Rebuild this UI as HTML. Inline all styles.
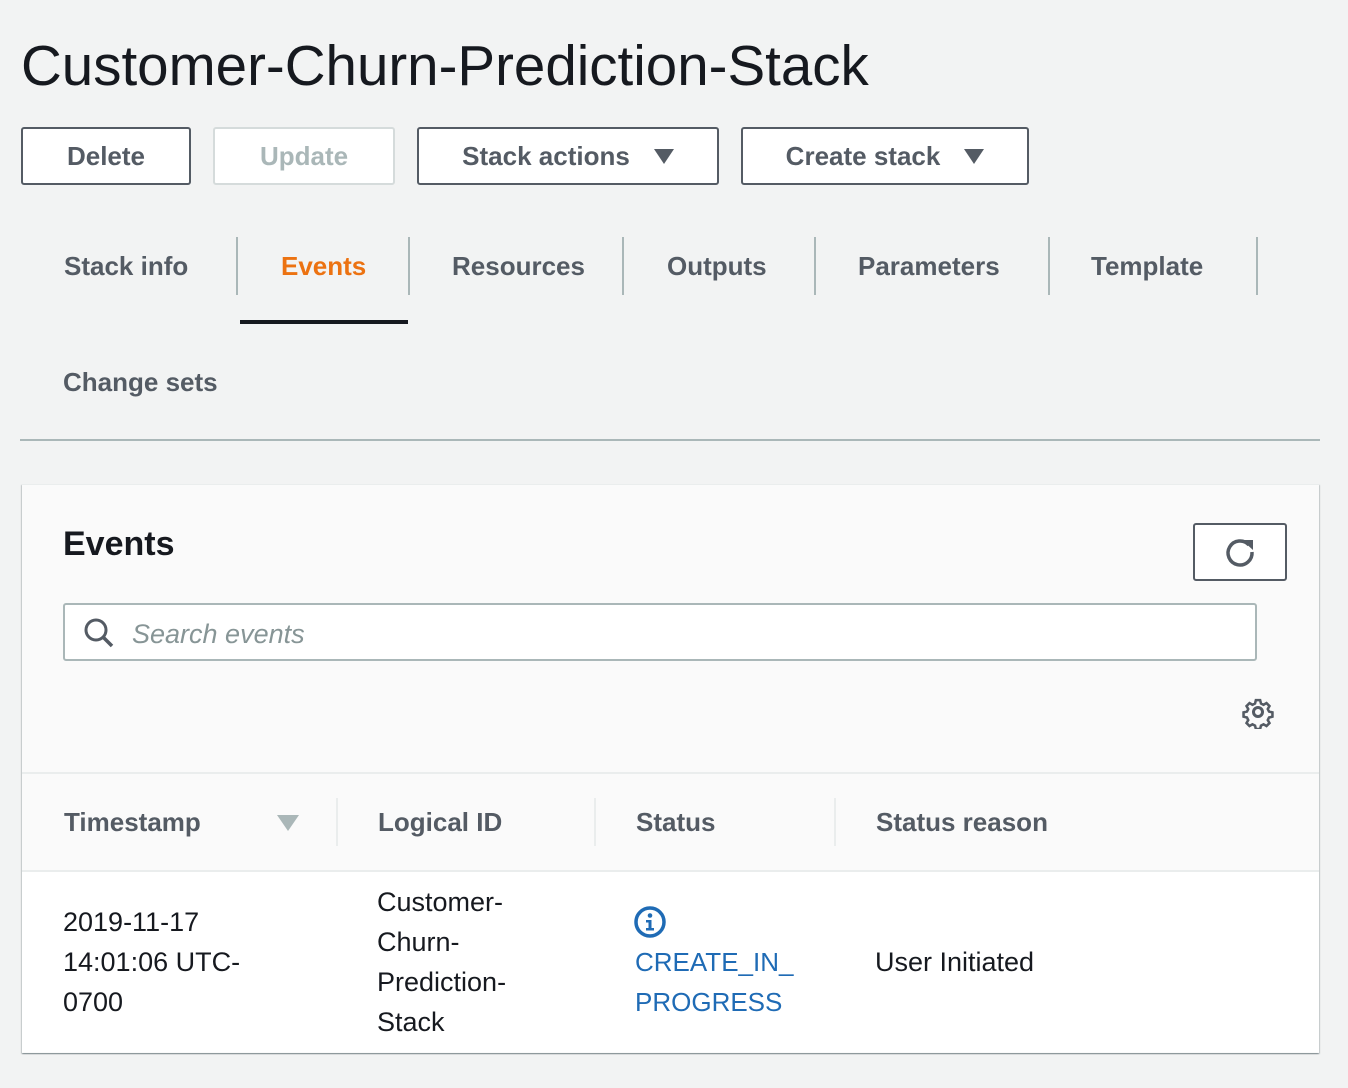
<!DOCTYPE html>
<html><head><meta charset="utf-8"><style>
*{margin:0;padding:0;box-sizing:border-box}
body{width:1348px;height:1088px;background:#f2f3f3;font-family:"Liberation Sans",sans-serif;position:relative;overflow:hidden;color:#545b64}
.a{position:absolute;white-space:nowrap}
.btn{position:absolute;border:2px solid #545b64;border-radius:3px;background:#fff;font-weight:bold;font-size:26px;display:flex;align-items:center;justify-content:center;color:#545b64}
.tab{position:absolute;font-weight:bold;font-size:26px;color:#545b64;line-height:30px}
.sep{position:absolute;width:2px;background:#aab7b8}
.tri{display:inline-block;width:0;height:0;border-left:10px solid transparent;border-right:10px solid transparent;border-top:15px solid #545b64;margin-left:24px}
.cell{position:absolute;font-size:27px;line-height:40px;color:#16191f}
</style></head><body>
<div class="a" style="left:21px;top:32px;font-size:56.5px;color:#16191f;line-height:68px">Customer-Churn-Prediction-Stack</div>

<div class="btn" style="left:21px;top:127px;width:170px;height:58px">Delete</div>
<div class="btn" style="left:213px;top:127px;width:182px;height:58px;border-color:#d5dbdb;color:#aab7b8">Update</div>
<div class="btn" style="left:417px;top:127px;width:302px;height:58px">Stack actions<span class="tri"></span></div>
<div class="btn" style="left:741px;top:127px;width:288px;height:58px">Create stack<span class="tri"></span></div>

<div class="tab" style="left:64px;top:251px">Stack info</div>
<div class="tab" style="left:281px;top:251px;color:#ec7211">Events</div>
<div class="tab" style="left:452px;top:251px">Resources</div>
<div class="tab" style="left:667px;top:251px">Outputs</div>
<div class="tab" style="left:858px;top:251px">Parameters</div>
<div class="tab" style="left:1091px;top:251px">Template</div>
<div class="tab" style="left:63px;top:367px">Change sets</div>
<div class="sep" style="left:236px;top:237px;height:58px"></div>
<div class="sep" style="left:408px;top:237px;height:58px"></div>
<div class="sep" style="left:622px;top:237px;height:58px"></div>
<div class="sep" style="left:814px;top:237px;height:58px"></div>
<div class="sep" style="left:1048px;top:237px;height:58px"></div>
<div class="sep" style="left:1256px;top:237px;height:58px"></div>
<div class="a" style="left:240px;top:320px;width:168px;height:4px;background:#16191f"></div>
<div class="a" style="left:20px;top:439px;width:1300px;height:2px;background:#aab7b8"></div>

<div class="a" style="left:22px;top:484px;width:1297px;height:569px;background:#fafafa;box-shadow:0 1px 1px 0 rgba(0,28,36,.3),1px 1px 1px 0 rgba(0,28,36,.15),-1px 1px 1px 0 rgba(0,28,36,.15);border-top:1px solid #eaeded"></div>
<div class="a" style="left:63px;top:524px;font-size:34px;font-weight:bold;color:#16191f;line-height:40px">Events</div>
<div class="btn" style="left:1193px;top:523px;width:94px;height:58px">
<svg width="34" height="34" viewBox="0 0 34 34"><path d="M26 10 A12 12 0 1 0 29 17" fill="none" stroke="#545b64" stroke-width="3.5"/><path d="M19 5 L30 5 L30 15 Z" fill="#545b64"/></svg></div>
<div class="a" style="left:63px;top:603px;width:1194px;height:58px;background:#fff;border:2px solid #aab7b8;border-radius:3px"></div>
<svg class="a" style="left:83px;top:617px" width="32" height="32" viewBox="0 0 32 32"><circle cx="13" cy="13" r="10" fill="none" stroke="#545b64" stroke-width="3"/><path d="M20 20 L29 29" stroke="#545b64" stroke-width="3.5"/></svg>
<div class="a" style="left:132px;top:617px;font-size:27px;font-style:italic;color:#879596;line-height:34px">Search events</div>
<svg class="a" style="left:1241px;top:695px" width="34" height="34" viewBox="0 0 34 34"><g fill="none" stroke="#545b64" stroke-width="3"><circle cx="17" cy="17" r="4.5"/><path d="M14.5 3h5l1 4 3 1.5 3.5-2 3.5 3.5-2 3.5 1.5 3 4 1v5l-4 1-1.5 3 2 3.5-3.5 3.5-3.5-2-3 1.5-1 4h-5l-1-4-3-1.5-3.5 2-3.5-3.5 2-3.5-1.5-3-4-1v-5l4-1 1.5-3-2-3.5 3.5-3.5 3.5 2 3-1.5z" transform="translate(17 17) scale(0.85) translate(-17 -17)"/></g></svg>

<div class="a" style="left:22px;top:772px;width:1297px;height:2px;background:#eaeded"></div>
<div class="a" style="left:22px;top:870px;width:1297px;height:2px;background:#eaeded"></div>
<div class="a" style="left:22px;top:872px;width:1297px;height:180px;background:#fff"></div>
<div class="tab" style="left:64px;top:807px">Timestamp</div>
<div class="a" style="left:277px;top:815px;width:0;height:0;border-left:11px solid transparent;border-right:11px solid transparent;border-top:16px solid #aab7b8"></div>
<div class="tab" style="left:378px;top:807px">Logical ID</div>
<div class="tab" style="left:636px;top:807px">Status</div>
<div class="tab" style="left:876px;top:807px">Status reason</div>
<div class="sep" style="left:336px;top:798px;height:48px;background:#eaeded"></div>
<div class="sep" style="left:594px;top:798px;height:48px;background:#eaeded"></div>
<div class="sep" style="left:834px;top:798px;height:48px;background:#eaeded"></div>

<div class="cell" style="left:63px;top:902px">2019-11-17<br>14:01:06 UTC-<br>0700</div>
<div class="cell" style="left:377px;top:882px">Customer-<br>Churn-<br>Prediction-<br>Stack</div>
<svg class="a" style="left:634px;top:906px" width="32" height="32" viewBox="0 0 32 32"><circle cx="16" cy="16" r="14" fill="none" stroke="#1f6bb5" stroke-width="3.5"/><circle cx="16" cy="9.5" r="2.3" fill="#1f6bb5"/><path d="M12 14h5.5v8h2.5v2.5h-8v-2.5h2.5v-5.5h-2.5z" fill="#1f6bb5"/></svg>
<div class="cell" style="left:635px;top:942px;color:#1f6bb5;font-size:26px">CREATE_IN_<br>PROGRESS</div>
<div class="cell" style="left:875px;top:942px">User Initiated</div>
</body></html>
